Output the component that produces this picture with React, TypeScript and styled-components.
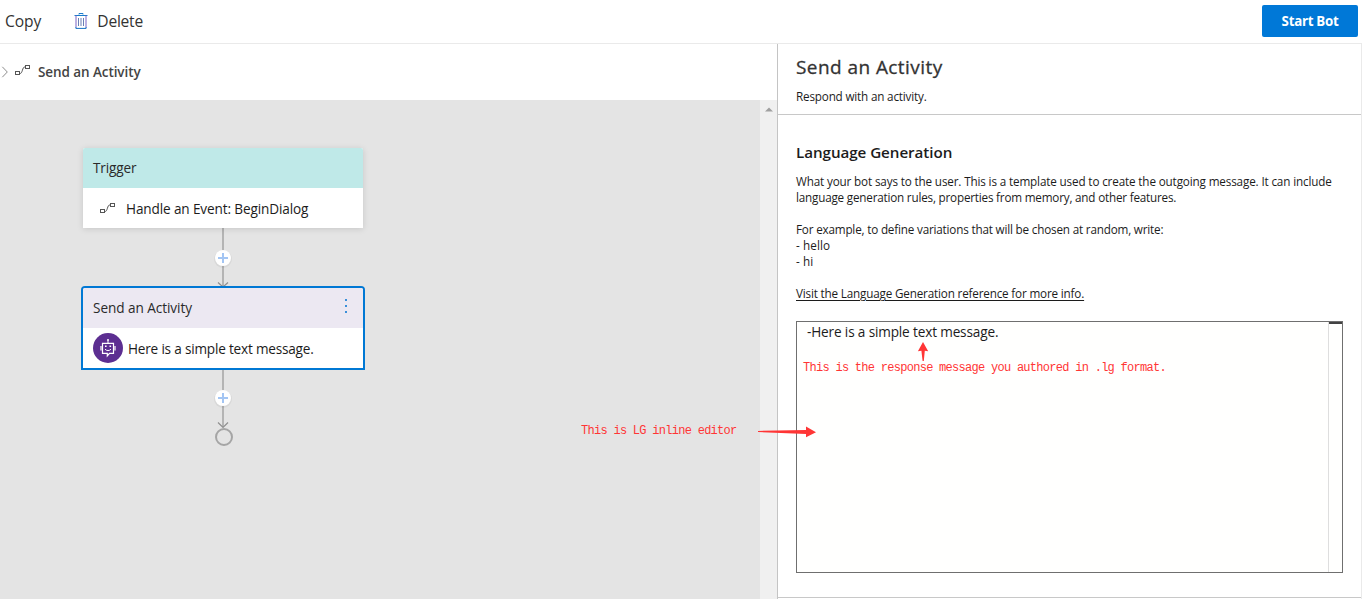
import React from "react";
import styled, { createGlobalStyle } from "styled-components";

const Global = createGlobalStyle`
  * { box-sizing: border-box; }
  body { margin: 0; background: #fff; font-family: "Open Sans", "Noto Sans", sans-serif; color: #1c1c1c; }
  p, h1, h2 { margin: 0; }
`;

const Page = styled.div`
  position: relative;
  display: flex;
  flex-direction: column;
  width: 1362px;
  height: 599px;
  overflow: hidden;
  white-space: nowrap;
`;

const Toolbar = styled.header`
  display: flex;
  align-items: flex-start;
  height: 44px;
  padding: 5px 4px 0 5px;
  border-bottom: 1px solid #eaeaea;
`;

const ToolButton = styled.button<{ $gap: number; $spacing: number }>`
  display: flex;
  align-items: center;
  gap: 9px;
  height: 32px;
  margin-right: ${(p) => p.$gap}px;
  padding: 0;
  border: 0;
  background: none;
  font: 400 15.6px "Open Sans", sans-serif;
  letter-spacing: ${(p) => p.$spacing}px;
  color: #333;
`;

const StartButton = styled.button`
  width: 96px;
  height: 32px;
  margin-left: auto;
  padding: 0;
  border: 0;
  border-radius: 2px;
  background: #0078d7;
  color: #fff;
  font: 700 13.3px "Open Sans", sans-serif;
  letter-spacing: -0.28px;
`;

const Main = styled.main`
  display: flex;
  flex: 1;
  min-height: 0;
`;

const Left = styled.section`
  display: flex;
  flex-direction: column;
  width: 777px;
`;

const Breadcrumb = styled.nav`
  display: flex;
  align-items: center;
  height: 56px;
  font-size: 13.5px;
  font-weight: 600;
  letter-spacing: -0.08px;
  color: #444;
`;

const BreadcrumbIcon = styled.span`
  display: flex;
  padding-bottom: 3px;
`;

const BreadcrumbLabel = styled.span`
  margin-left: 8px;
`;

const CanvasRow = styled.div`
  display: flex;
  flex: 1;
`;

const Canvas = styled.div`
  position: relative;
  flex: 1;
  background: #e4e4e4;
`;

const ScrollTrack = styled.div`
  display: flex;
  justify-content: center;
  width: 17px;
  padding-top: 7px;
  background: #f0f0f0;
`;

const Wires = styled.svg`
  position: absolute;
  left: 0;
  top: 0;
`;

const Node = styled.div<{ $x: number; $y: number; $selected?: boolean }>`
  position: absolute;
  left: ${(p) => p.$x}px;
  top: ${(p) => p.$y}px;
  width: 280px;
  height: 80px;
  border-radius: 2px 2px 0 0;
  background: #fff;
  box-shadow: ${(p) =>
    p.$selected ? "0 0 0 2px #0078d4" : "0 1px 6px rgba(0,0,0,.13)"};
`;

const NodeHeader = styled.div<{ $tint: string; $spacing: number }>`
  display: flex;
  align-items: center;
  justify-content: space-between;
  height: 40px;
  padding: 0 16px 0 10px;
  border-radius: 2px 2px 0 0;
  background: ${(p) => p.$tint};
  font-size: 13.6px;
  letter-spacing: ${(p) => p.$spacing}px;
  color: #2a2a2a;
`;

const HeaderText = styled.span`
  padding-bottom: 2px;
`;

const NodeBody = styled.div<{ $indent: number; $gap: number; $spacing: number }>`
  display: flex;
  align-items: center;
  gap: ${(p) => p.$gap}px;
  height: 40px;
  padding-left: ${(p) => p.$indent}px;
  font-size: 13.6px;
  letter-spacing: ${(p) => p.$spacing}px;
`;

const NodeText = styled.span`
  padding-top: 2px;
  line-height: 20px;
`;

const Panel = styled.aside`
  display: flex;
  flex-direction: column;
  flex: 1;
  border-left: 1px solid #c4c4c4;
  border-right: 1px solid #eaeaea;
`;

const PanelHead = styled.div`
  height: 71px;
  padding: 9px 18px 0;
  border-bottom: 1px solid #c8c8c8;
`;

const Title = styled.h1`
  font-size: 19px;
  font-weight: 500;
  line-height: 28px;
  letter-spacing: 0.43px;
  color: #333;
  -webkit-text-stroke: 0.3px #333;
`;

const Subtitle = styled.p`
  margin-top: 7px;
  font-size: 11.7px;
  line-height: 16px;
  letter-spacing: -0.18px;
`;

const PanelBody = styled.div`
  height: 483px;
  padding: 27px 18px 0;
  border-bottom: 1px solid #c8c8c8;
`;

const SectionTitle = styled.h2`
  font-size: 15.2px;
  font-weight: 600;
  line-height: 20px;
  letter-spacing: -0.06px;
`;

const Line = styled.p<{ $spacing: number }>`
  height: 16px;
  font-size: 11.7px;
  line-height: 16px;
  letter-spacing: ${(p) => p.$spacing}px;
`;

const Help = styled.div`
  margin-top: 11px;
`;

const HelpLink = styled.a`
  text-decoration: underline;
  text-underline-offset: 2px;
`;

const Editor = styled.div`
  display: flex;
  width: 547px;
  height: 252px;
  margin-top: 20px;
  border: 1px solid #6f6f6f;
  background: #fffffe;
`;

const EditorText = styled.div`
  flex: 1;
  padding: 0 0 0 10px;
  font-size: 13.6px;
  line-height: 19px;
  letter-spacing: -0.15px;
`;

const EditorRuler = styled.div`
  width: 14px;
  border-left: 1px solid #dedede;
`;

const RulerMark = styled.div`
  height: 2px;
  background: #424242;
`;

const Note = styled.span<{ $x: number; $y: number }>`
  position: absolute;
  left: ${(p) => p.$x}px;
  top: ${(p) => p.$y}px;
  font: 12px/16px "Liberation Mono", monospace;
  letter-spacing: -0.72px;
  color: #ff3535;
`;

const Arrows = styled.svg`
  position: absolute;
  left: 750px;
  top: 335px;
  pointer-events: none;
`;

const TrashIcon = () => (
  <svg width="14" height="16" viewBox="0 0 14 16" fill="none">
    <path d="M5 1.5V.5h4v1" stroke="#1b7bcb" />
    <path d="M.5 2.5h13" stroke="#1b7bcb" />
    <path d="M2 2.5v12M12 2.5v12" stroke="#7b62c4" />
    <path d="M1.9 14v1.4h10.2V14" stroke="#1672c4" />
    <path d="M4.5 5v8M7 5v8M9.5 5v8" stroke="#6b7fb5" />
  </svg>
);

const EventIcon = () => (
  <svg width="15" height="11" viewBox="0 0 15 11" fill="none" stroke="#555">
    <rect x=".5" y="6.5" width="4" height="3" />
    <rect x="10.5" y=".5" width="4" height="3" />
    <path d="M4.5 8.4h.9C7.4 8.4 7.4 2 9.6 2h.9" />
  </svg>
);

const ChevronIcon = () => (
  <svg width="15" height="12" viewBox="0 0 15 12" fill="none">
    <path d="M2.3.8 7.3 6l-5 5.2" stroke="#8c8c8c" />
  </svg>
);

const MoreIcon = () => (
  <svg width="2" height="18" viewBox="0 0 2 18" fill="#3a8fd9">
    <path d="M0 0h2v2H0zM0 6h2v2H0zM0 12h2v2H0z" />
  </svg>
);

const BotIcon = () => (
  <svg width="30" height="30" viewBox="0 0 30 30" fill="none">
    <circle cx="15" cy="15" r="15" fill="#5c2e91" />
    <path d="M9.5 10.3h11v10h-4l-2.2 2.5v-2.5H9.5z" stroke="#fff" strokeWidth="1.2" />
    <path d="M8 13v4.4M22 13v4.4" stroke="#fff" strokeWidth="1.2" />
    <path d="M15 7.5v3" stroke="#fff" />
    <circle cx="15" cy="7" r="1" fill="#fff" />
    <path d="M12 12.5h1.6v1.6H12zM16.5 12.5h1.6v1.6h-1.6z" fill="#fff" />
    <path d="M12 16.2c1.4 1.8 4.6 1.8 6 0" stroke="#fff" />
  </svg>
);

const AddMark = ({ y }: { y: number }) => (
  <g>
    <circle cx="223" cy={y + 1} r="9" fill="#000" opacity=".05" />
    <circle cx="223" cy={y} r="8" fill="#fff" />
    <path d={`M218 ${y}h10M223 ${y - 5}v10`} stroke="#a3c5f3" strokeWidth="2" />
  </g>
);

export default function App() {
  return (
    <Page>
      <Global />
      <Toolbar>
        <ToolButton $gap={33} $spacing={-0.05}>Copy</ToolButton>
        <ToolButton $gap={0} $spacing={-0.26}>
          <TrashIcon />
          Delete
        </ToolButton>
        <StartButton>Start Bot</StartButton>
      </Toolbar>
      <Main>
        <Left>
          <Breadcrumb>
            <ChevronIcon />
            <BreadcrumbIcon>
              <EventIcon />
            </BreadcrumbIcon>
            <BreadcrumbLabel>Send an Activity</BreadcrumbLabel>
          </Breadcrumb>
          <CanvasRow>
            <Canvas>
              <Wires width="760" height="499" viewBox="0 100 760 499" fill="none">
                <path d="M223 228v59M223 370v57" stroke="#b4b4b4" strokeWidth="2" />
                <path d="M218 282.5l5 4.5 5-4.5M218 422.5l5 5 5-5" stroke="#8f8f8f" strokeWidth="1.2" />
                <AddMark y={258} />
                <AddMark y={398} />
                <circle cx="224" cy="437" r="8" stroke="#a5a5a5" strokeWidth="2" />
              </Wires>
              <Node $x={83} $y={48}>
                <NodeHeader $tint="#bfe9e8" $spacing={-0.15}>
                  <HeaderText>Trigger</HeaderText>
                </NodeHeader>
                <NodeBody $indent={17} $gap={11} $spacing={-0.13}>
                  <EventIcon />
                  <NodeText>Handle an Event: BeginDialog</NodeText>
                </NodeBody>
              </Node>
              <Node $x={83} $y={188} $selected>
                <NodeHeader $tint="#ece8f2" $spacing={-0.06}>
                  <HeaderText>Send an Activity</HeaderText>
                  <MoreIcon />
                </NodeHeader>
                <NodeBody $indent={10} $gap={5} $spacing={-0.2}>
                  <BotIcon />
                  <NodeText>Here is a simple text message.</NodeText>
                </NodeBody>
              </Node>
            </Canvas>
            <ScrollTrack>
              <svg width="8" height="5" viewBox="0 0 8 5">
                <path d="M0 4.5 4 .5l4 4z" fill="#a0a0a0" />
              </svg>
            </ScrollTrack>
          </CanvasRow>
        </Left>
        <Panel>
          <PanelHead>
            <Title>Send an Activity</Title>
            <Subtitle>Respond with an activity.</Subtitle>
          </PanelHead>
          <PanelBody>
            <SectionTitle>Language Generation</SectionTitle>
            <Help>
              <Line $spacing={-0.144}>
                What your bot says to the user. This is a template used to create the outgoing message. It can include
              </Line>
              <Line $spacing={-0.198}>language generation rules, properties from memory, and other features.</Line>
              <Line $spacing={0} />
              <Line $spacing={-0.183}>For example, to define variations that will be chosen at random, write:</Line>
              <Line $spacing={0.1}>- hello</Line>
              <Line $spacing={0.1}>- hi</Line>
              <Line $spacing={0} />
              <Line $spacing={-0.172}>
                <HelpLink>Visit the Language Generation reference for more info.</HelpLink>
              </Line>
            </Help>
            <Editor>
              <EditorText>-Here is a simple text message.</EditorText>
              <EditorRuler>
                <RulerMark />
              </EditorRuler>
            </Editor>
          </PanelBody>
        </Panel>
      </Main>
      <Note $x={803} $y={360}>This is the response message you authored in .lg format.</Note>
      <Note $x={581} $y={423}>This is LG inline editor</Note>
      <Arrows width="190" height="110" viewBox="750 335 190 110" fill="#ff3535">
        <path d="M923 342l5.2 9.2-3.4-.4-1 10.2h-1.2l-1.2-10.2-3.5.4z" />
        <path d="M758 430.9 806 430v-3.4l10 5.6-10 5v-3.2L758 432z" />
      </Arrows>
    </Page>
  );
}
